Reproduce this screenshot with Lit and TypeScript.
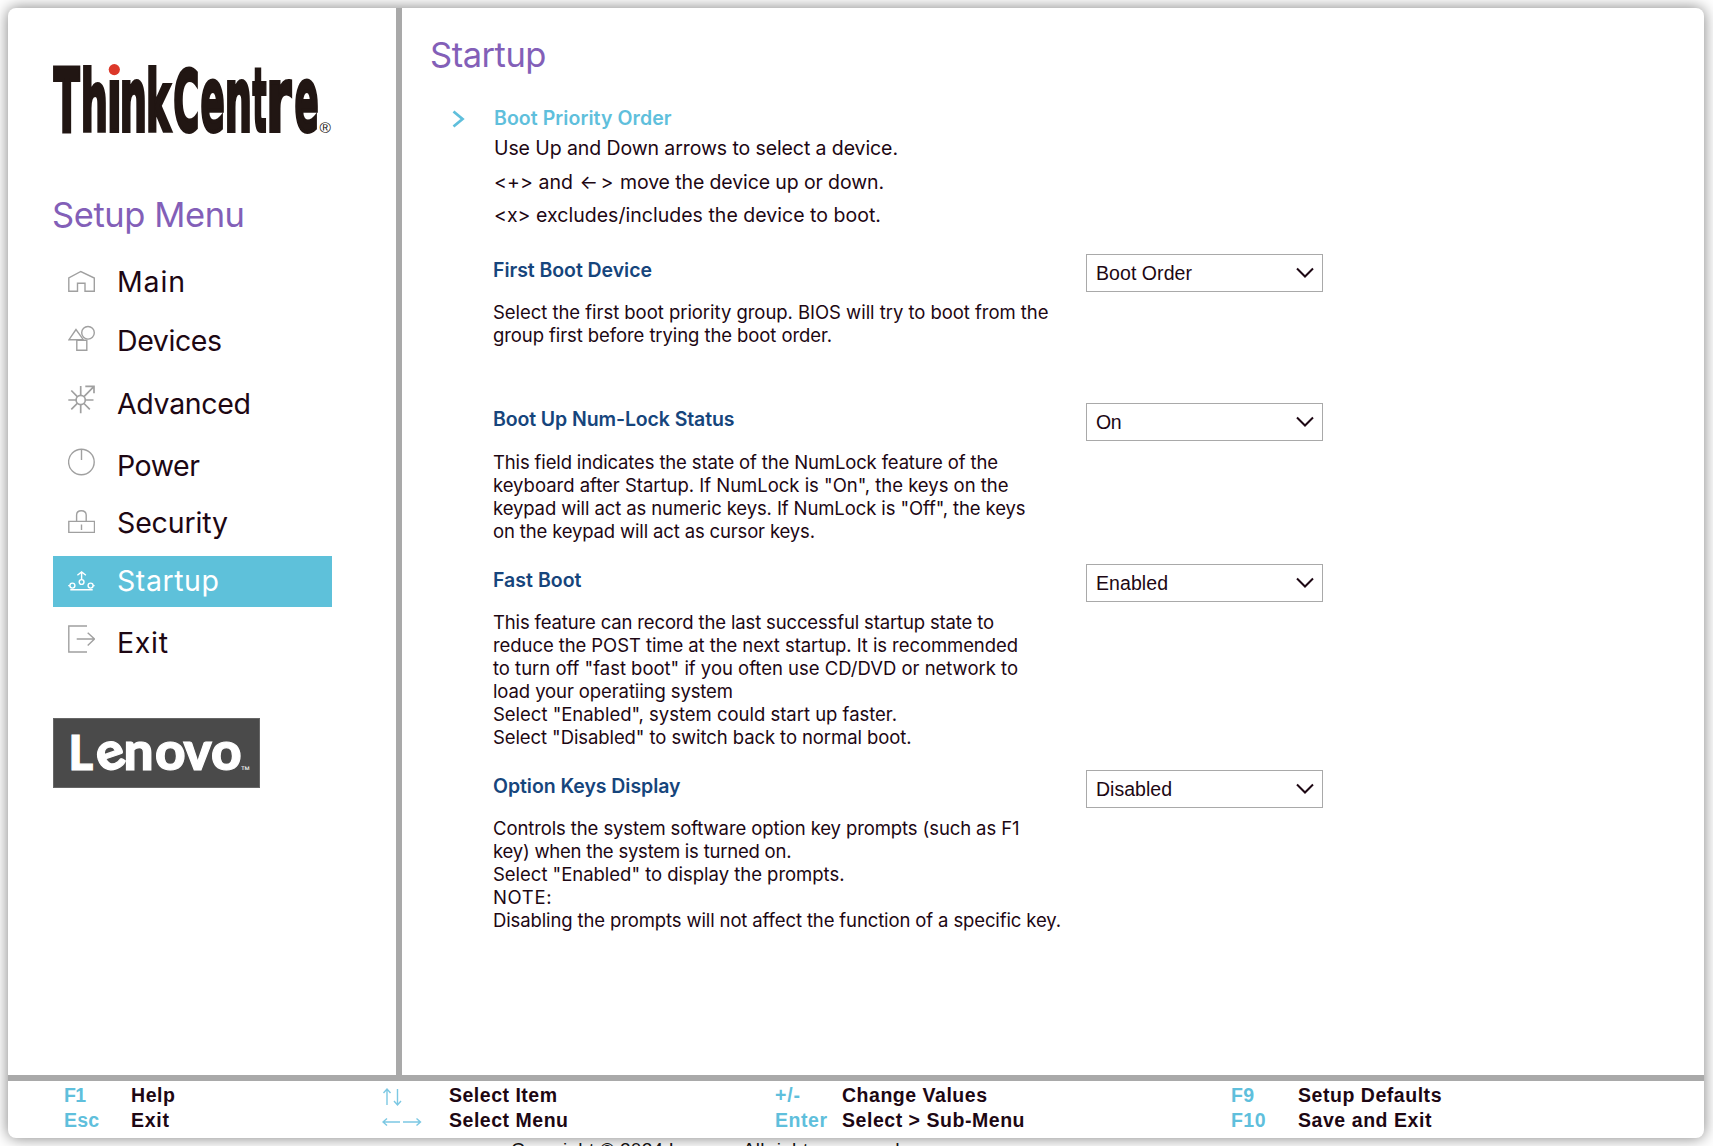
import { LitElement, html, css, svg } from "lit";
import { customElement, property } from "lit/decorators.js";

/** One line of text whose letter spacing is set so that it spans `width` pixels. */
@customElement("fit-text")
class FitText extends LitElement {
  @property() text = "";
  @property({ type: Number }) width = 0;
  static styles = css`
    :host { display: block; white-space: pre; }
    .line { display: inline-block; }
  `;
  updated() {
    const line = this.renderRoot.querySelector(".line") as HTMLElement;
    line.style.letterSpacing = "0px";
    const natural = line.getBoundingClientRect().width;
    if (this.width > 0 && this.text.length > 1) {
      const spacing = (this.width - natural) / (this.text.length - 1);
      line.style.letterSpacing = `${spacing}px`;
      line.style.marginRight = `${-spacing}px`;
    }
  }
  render() { return html`<span class="line">${this.text}</span>`; }
}

type Line = [string, number];

const icons: Record<string, unknown> = {
  Main: svg`<path d="M.8 34.3V21L12.8 14.5 26.3 21v13.3H17v-8H9.5v8z"/>`,
  Devices: svg`<path d="M8 13.5L1 23.7H15.3zM8.8 24.3H18.8V34.2H8.8z"/><circle cx="20" cy="16.8" r="6.3"/>`,
  Advanced: svg`<g stroke-width="1.7"><circle cx="12.7" cy="22" r="4.6"/><path d="M.3 22H8M17.5 22H25.5M12.7 8V17M12.7 27V35.3M3.3 12.5L9.3 18.7M16 25.5L21.8 31.3M3.3 31.3L9.3 25.4M16 18.6L26 8.3M17.3 8.3H26V15.2"/></g>`,
  Power: svg`<circle cx="13.4" cy="21" r="12.8"/><path d="M13.5 8V19"/>`,
  Security: svg`<path d="M.8 23.4H26.5V34.4H.8zM8.6 23.4V17Q8.6 12.7 13.3 12.7T18.2 17V23.4M13.5 26.5V32"/>`,
  Startup: svg`<path d="M13.6 16V23.3M9.4 19.2L13.6 16L17.9 19.2M.2 29.6H1.8M25 29.6H26.6M2.3 33.7H24.7"/><circle cx="13.6" cy="26" r="2.4"/><circle cx="4.4" cy="29.6" r="2.5"/><circle cx="22.6" cy="29.6" r="2.5"/>`,
  Exit: svg`<path d="M19 8H.8V34H19M8.7 21H26.5M19.7 14.7L26.5 21L19.7 27.6"/>`,
};

const menu: { name: string; width: number; cls: string }[] = [
  { name: "Main", width: 68, cls: "main" },
  { name: "Devices", width: 105, cls: "devices" },
  { name: "Advanced", width: 134, cls: "advanced" },
  { name: "Power", width: 83, cls: "power" },
  { name: "Security", width: 111, cls: "security" },
  { name: "Startup", width: 102, cls: "startup" },
  { name: "Exit", width: 51, cls: "exit" },
];

/** A width of 0 keeps the glyphs unspaced so that the arrow forms as one shape. */
const intro: Line[][] = [
  [["Use Up and Down arrows to select a device.", 404]],
  [["<+> and", 79], ["<-", 0], [">", 0], ["move the device up or down.", 264]],
  [["<x> excludes/includes the device to boot.", 387]],
];

const settings: { title: Line; value: Line; cls: string; lines: Line[] }[] = [
  { title: ["First Boot Device", 159], value: ["Boot Order", 96], cls: "first", lines: [
    ["Select the first boot priority group. BIOS will try to boot from the", 555.5],
    ["group first before trying the boot order.", 339]] },
  { title: ["Boot Up Num-Lock Status", 241.5], value: ["On", 25.5], cls: "numlock", lines: [
    ["This field indicates the state of the NumLock feature of the", 505],
    ["keyboard after Startup. If NumLock is \"On\", the keys on the", 515.5],
    ["keypad will act as numeric keys. If NumLock is \"Off\", the keys", 532.5],
    ["on the keypad will act as cursor keys.", 322]] },
  { title: ["Fast Boot", 88.5], value: ["Enabled", 72], cls: "fast", lines: [
    ["This feature can record the last successful startup state to", 501],
    ["reduce the POST time at the next startup. It is recommended", 525],
    ["to turn off \"fast boot\" if you often use CD/DVD or network to", 525],
    ["load your operatiing system", 240],
    ["Select \"Enabled\", system could start up faster.", 404],
    ["Select \"Disabled\" to switch back to normal boot.", 418.5]] },
  { title: ["Option Keys Display", 187.5], value: ["Disabled", 76], cls: "option", lines: [
    ["Controls the system software option key prompts (such as F1", 526.5],
    ["key) when the system is turned on.", 298.5],
    ["Select \"Enabled\" to display the prompts.", 351.5],
    ["NOTE:", 58.5],
    ["Disabling the prompts will not affect the function of a specific key.", 568]] },
];

const hints: { cls: string; rows: { key: Line; label: Line }[] }[] = [
  { cls: "h1", rows: [{ key: ["F1", 22], label: ["Help", 44] }, { key: ["Esc", 35], label: ["Exit", 38] }] },
  { cls: "h2", rows: [{ key: ["ud", 0], label: ["Select Item", 108] }, { key: ["lr", 0], label: ["Select Menu", 119] }] },
  { cls: "h3", rows: [{ key: ["+/-", 25], label: ["Change Values", 145] }, { key: ["Enter", 52], label: ["Select > Sub-Menu", 182.5] }] },
  { cls: "h4", rows: [{ key: ["F9", 23], label: ["Setup Defaults", 143.5] }, { key: ["F10", 34.5], label: ["Save and Exit", 133.5] }] },
];

const arrows: Record<string, unknown> = {
  ud: svg`<path d="M5 6V22M1.5 10L5 6L8.500 10M15.500 6V22M12 18L15.500 22L19 18"/>`,
  lr: svg`<path d="M1 14H18M5 10.500L1 14L5 17.500M21 14H38.500M34.500 10.500L38.500 14L34.500 17.500"/>`,
};

/** Condensed wordmark letters: glyph, left and right edge, side bearing and ink width in em, vertical stretch. */
const wordmark: [string, number, number, number, number, number][] = [
  ["T", 53, 80.5, 0.005, 0.672, 1.01],
  ["h", 83, 106, 0.084, 0.55, 0.97],
  ["i", 109.5, 119, 0.084, 0.175, 1.04],
  ["n", 122, 145, 0.084, 0.55, 1.03],
  ["k", 148, 172.5, 0.084, 0.61, 0.97],
  ["C", 174, 198, 0.05, 0.62, 0.98],
  ["e", 201, 224, 0.043, 0.587, 1.03],
  ["n", 227, 250, 0.084, 0.55, 1.03],
  ["t", 252, 267, 0.015, 0.445, 1.01],
  ["r", 269.5, 292, 0.084, 0.406, 1.03],
  ["e", 295, 318, 0.043, 0.587, 1.03],
];
const LETTER = 86;

@customElement("app-root")
class AppRoot extends LitElement {
  static styles = css`
    :host { display: block; box-sizing: border-box; width: 100%; height: 1146px; overflow: hidden; padding: 8px 9px 0 8px;
      background: #fff; color: #1d0713; font-family: Inter, Roboto, "Noto Sans", sans-serif; }
    .card { display: grid; grid-template: 1067px 6px 57px / 388px 6px 1fr; height: 1130px; background: #fff; border-radius: 8px;
      box-shadow: 0 0 15px rgba(0,0,0,.5); }
    .divider, .rule { background: #a9a9a9; }
    .rule { grid-column: 1 / -1; }
    .side { padding: 50px 0 0 45px; display: flex; flex-direction: column; align-items: flex-start; }
    .brand { display: block; overflow: visible; }
    .h { font-size: 34.500px; font-weight: 400; line-height: 44px; color: #835fb8; margin-left: -1px; }
    .side .h { margin-top: 51px; }
    .nav { display: flex; flex-direction: column; margin-top: 20px; }
    .item { display: flex; height: 51px; width: 279px; box-sizing: border-box; padding-left: 15px; font-size: 28.500px; font-weight: 400; line-height: 50px; gap: 22px; }
    .item svg { flex: none; stroke: #a0a0a0; fill: none; stroke-width: 1.400; }
    .devices { margin-top: 8px; } .advanced { margin-top: 11px; } .power { margin-top: 12px; }
    .advanced fit-text { padding-top: 1px; }
    .security { margin-top: 6px; } .startup { margin-top: 7px; background: #5ec1da; color: #fff; } .exit { margin-top: 11px; }
    .item.startup svg { stroke: #fff; }
    .lenovo { display: block; margin-top: 49px; }
    .page { padding: 25px 0 0 29px; display: flex; flex-direction: column; }
    .intro { display: grid; grid-template-columns: 63px 1fr; margin-top: 23px; }
    .intro .chev { margin: 10px 0 0 21px; }
    .lead { font-size: 19.500px; line-height: 33.5px; padding-top: 5px; }
    .lead .t { font-weight: 600; color: #5fbfdc; line-height: 26px; height: 27px; }
    .words { display: flex; gap: 6.500px; height: 33.500px; }
    .arrow { width: 21px; }
    .close { width: 13px; margin-left: -6.500px; }
    .set { display: grid; grid-template-columns: 593px 237px; padding-left: 62px; align-items: start; }
    .set.first { height: 149px; margin-top: 21.500px; } .set.numlock { height: 161px; } .set.fast { height: 206px; }
    .st { font-size: 19.500px; font-weight: 600; line-height: 32px; color: #16457c; }
    .sd { font-size: 18.500px; line-height: 23px; margin-top: 15px; }
    .numlock .sd { margin-top: 16px; }
    .sel { box-sizing: border-box; height: 38px; border: 1px solid #a9a9a9; padding: 0 8px 0 9px; display: flex; justify-content: space-between; align-items: center;
      font: 19.500px/36px "Liberation Sans", Arial, sans-serif; }
    .foot { grid-column: 1 / -1; display: grid; grid-template-columns: 318px 393px 456px 1fr; padding: 2px 0 0 56px;
      font: bold 19.500px/25px "Liberation Sans", Arial, sans-serif; }
    .foot .row { display: grid; height: 25px; grid-template-columns: 67px 1fr; }
    .key { color: #5fbfdc; }
    .key svg { display: block; }
    .copy { padding: 1px 0 0 503px; font: 19px/22px "Liberation Sans", Arial, sans-serif; color: #111; }
  `;

  private setting(s: (typeof settings)[number]) {
    return html`<section class="set ${s.cls}">
      <div>
        <fit-text class="st" .text=${s.title[0]} .width=${s.title[1]}></fit-text>
        <div class="sd">${s.lines.map(([t, w]) => html`<fit-text .text=${t} .width=${w}></fit-text>`)}</div>
      </div>
      <div class="sel">
        <fit-text .text=${s.value[0]} .width=${s.value[1]}></fit-text>
        <svg width="18" height="12" fill="none" stroke="#1d0713" stroke-width="2"><path d="M1 1.500L9 9.500L17 1.500"/></svg>
      </div>
    </section>`;
  }

  private letter([glyph, x0, x1, bearing, ink, sy]: (typeof wordmark)[number]) {
    const sx = (x1 - x0 - 2) / (ink * LETTER);
    const tx = x0 + 1 - bearing * LETTER * sx;
    return svg`<text transform="translate(${tx} 130.500) scale(${sx} ${sy})">${glyph}</text>`;
  }

  private word([t, w]: Line) {
    const cls = t === "<-" ? "arrow" : t === ">" ? "close" : "";
    return html`<fit-text class=${cls} .text=${t} .width=${w}></fit-text>`;
  }

  render() {
    return html`<div class="card">
      <aside class="side">
        <svg class="brand" width="282" height="84" viewBox="53 58 282 84">
          <g fill="#211613" stroke="#211613" stroke-width="4" font-family="DejaVu Sans" font-weight="700" font-size=${LETTER}>
            ${wordmark.map((l) => this.letter(l))}
          </g>
          <rect x="107.500" y="56" width="13" height="22" fill="#fff"/>
          <circle cx="114.300" cy="69.600" r="5.600" fill="#dc3829"/>
          <text x="319.500" y="132.500" font-family="Liberation Sans" font-size="15.500" fill="#211613">®</text>
        </svg>
        <fit-text class="h" .text=${"Setup Menu"} .width=${193}></fit-text>
        <nav class="nav">
          ${menu.map((m) => html`<div class="item ${m.cls}"><svg width="27" height="51">${icons[m.name]}</svg><fit-text .text=${m.name} .width=${m.width}></fit-text></div>`)}
        </nav>
        <svg class="lenovo" width="207" height="70" viewBox="53 718 207 70">
          <rect x="53.500" y="718.500" width="206" height="69" fill="#4a4a4a" stroke="#666"/>
          <g fill="#fff" stroke="#fff" stroke-width="1.200" font-family="Lato" font-weight="900">
            <text font-size="47" x="68.500" y="769.500">L</text>
            <text font-size="53" text-anchor="middle" x="110.500" y="769.500" transform="rotate(-19 110.500 755.700)">e</text>
            <text font-size="53" y="769.500" x="123.500 155 183.500 211">novo</text>
            <text font-family="Liberation Sans" font-weight="400" font-size="9.500" stroke="none" x="240.500" y="773">™</text>
          </g>
        </svg>
      </aside>
      <div class="divider"></div>
      <main class="page">
        <fit-text class="h" .text=${"Startup"} .width=${116.500}></fit-text>
        <div class="intro">
          <svg class="chev" width="14" height="18" fill="none" stroke="#5fbfdc" stroke-width="2.800"><path d="M1.500 1.500L10.500 9L1.500 16.500"/></svg>
          <div class="lead">
            <fit-text class="t" .text=${"Boot Priority Order"} .width=${177.500}></fit-text>
            ${intro.map((parts) => html`<div class="words">${parts.map((p) => this.word(p))}</div>`)}
          </div>
        </div>
        ${settings.map((s) => this.setting(s))}
      </main>
      <div class="rule"></div>
      <footer class="foot">
        ${hints.map((h) => html`<div class=${h.cls}>${h.rows.map((r) => html`<div class="row">
          <div class="key">${arrows[r.key[0]]
            ? html`<svg width="40" height="25" fill="none" stroke="#7cc8e3" stroke-width="1.400">${arrows[r.key[0]]}</svg>`
            : html`<fit-text .text=${r.key[0]} .width=${r.key[1]}></fit-text>`}</div>
          <fit-text .text=${r.label[0]} .width=${r.label[1]}></fit-text></div>`)}</div>`)}
      </footer>
    </div>
    <fit-text class="copy" .text=${"Copyright © 2024 Lenovo. All rights reserved."} .width=${394}></fit-text>`;
  }
}
